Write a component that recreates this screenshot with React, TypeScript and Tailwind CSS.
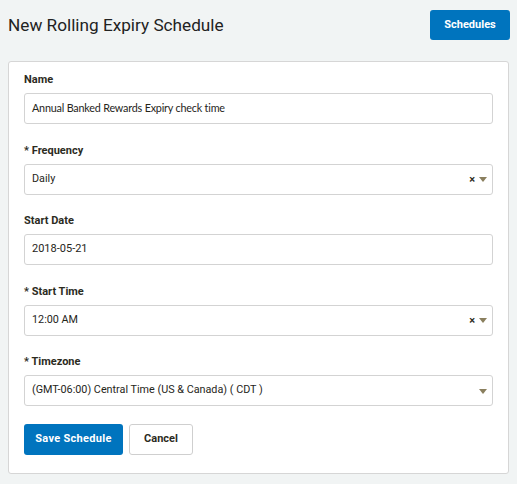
import React from 'react'

type FieldProps = {
    label: string
    required?: boolean
    children: React.ReactNode
}

function Field({ label, required, children }: FieldProps) {
    return (
        <div className="flex flex-col">
            <label className="h-[14px] text-[11px] font-bold leading-[14px] text-[#2c2b1e]">
                {required ? '* ' : ''}{label}
            </label>
            <div className="mt-[6px]">{children}</div>
        </div>
    )
}

function TextBox({ value, font }: { value: string; font?: string }) {
    return (
        <div className="flex h-[31px] items-center rounded-[3px] border border-[#d3d3d3] bg-white px-[7px]">
            <span className={`text-[#26251a] ${font ?? 'text-[11px]'}`}>{value}</span>
        </div>
    )
}

function SelectBox({ value, clearable }: { value: string; clearable?: boolean }) {
    return (
        <div className="flex h-[31px] items-center rounded-[3px] border border-[#d3d3d3] bg-white pl-[7px] pr-[5px]">
            <span className="flex-1 text-[10.8px] text-[#26251a]">{value}</span>
            {clearable && (
                <span className="mr-[4px] text-[11px] font-bold leading-none text-[#2e2e22]">×</span>
            )}
            {/* caret */}
            <svg width="8" height="5" viewBox="0 0 8 5" className="mt-[1px]">
                <path d="M0 0 L8 0 L4 5 Z" fill="#8a7f5e" />
            </svg>
        </div>
    )
}

export default function App() {
    return (
        <div className="min-h-[484px] w-[517px] bg-[#f1f4f4] font-['Roboto',sans-serif]">
            {/* header */}
            <div className="flex items-center justify-between pl-[8px] pr-[7px] pt-[10px]">
                <h1 className="text-[17.2px] font-normal leading-[29px] text-[#222]">New Rolling Expiry Schedule</h1>
                <button className="h-[30px] w-[80px] rounded-[3px] bg-[#0074be] text-[11px] font-bold text-white">
                    Schedules
                </button>
            </div>

            {/* form card */}
            <div className="mx-[8px] mt-[21px] w-[501px] rounded-[3px] border border-[#d6d6d6] bg-white px-[15px] pb-[18px] pt-[11px]">
                <div className="flex flex-col gap-[19.5px]">
                    <Field label="Name">
                        <TextBox value="Annual Banked Rewards Expiry check time" font="font-['Lato',sans-serif] text-[10.8px] tracking-[-0.2px]" />
                    </Field>
                    <Field label="Frequency" required>
                        <SelectBox value="Daily" clearable />
                    </Field>
                    <Field label="Start Date">
                        <TextBox value="2018-05-21" />
                    </Field>
                    <Field label="Start Time" required>
                        <SelectBox value="12:00 AM" clearable />
                    </Field>
                    <Field label="Timezone" required>
                        <SelectBox value="(GMT-06:00) Central Time (US & Canada) ( CDT )" />
                    </Field>
                </div>

                <div className="mt-[18px] flex gap-[6px]">
                    <button className="h-[31px] w-[99px] rounded-[3px] bg-[#0074be] text-[11px] font-bold tracking-[0.3px] text-white">
                        Save Schedule
                    </button>
                    <button className="h-[31px] w-[64px] rounded-[3px] border border-[#cfcfcf] bg-white text-[11px] font-bold text-[#2c2b1e]">
                        Cancel
                    </button>
                </div>
            </div>
        </div>
    )
}
